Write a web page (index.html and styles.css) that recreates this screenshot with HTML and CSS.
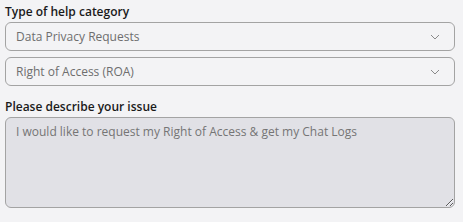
FILE: index.html
```html
<!DOCTYPE html>
<html lang="en">
<head>
  <meta charset="UTF-8">
  <title>Help request</title>
  <link rel="stylesheet" href="styles.css">
</head>
<body>
  <div class="form">
    <label class="label">Type of help category</label>
    <div class="select">
      <span>Data Privacy Requests</span>
      <svg class="chev" width="10" height="6" viewBox="0 0 10 6"><path d="M1 1l4 4 4-4" fill="none" stroke="#8a8a8a" stroke-width="1"/></svg>
    </div>
    <div class="select">
      <span>Right of Access (ROA)</span>
      <svg class="chev" width="10" height="6" viewBox="0 0 10 6"><path d="M1 1l4 4 4-4" fill="none" stroke="#8a8a8a" stroke-width="1"/></svg>
    </div>

    <label class="label label-2">Please describe your issue</label>
    <textarea class="issue" disabled>I would like to request my Right of Access &amp; get my Chat Logs</textarea>
  </div>
</body>
</html>
```

FILE: styles.css
```css
* {
  margin: 0;
  padding: 0;
  box-sizing: border-box;
}

body {
  font-family: "Open Sans", sans-serif;
  background-color: #f3f3f5;
  width: 463px;
  height: 222px;
  overflow: hidden;
}

.form {
  display: flex;
  flex-direction: column;
  padding: 4px 8px 0 5px;
}

.label {
  font-size: 12px;
  font-weight: 600;
  color: #1a1a1a;
  line-height: 16px;
  margin-bottom: 2px;
}

.label-2 {
  margin-top: 7px;
}

.select {
  display: flex;
  justify-content: space-between;
  align-items: center;
  height: 29px;
  border: 1px solid #a3a3a3;
  border-radius: 6px;
  padding: 0 14px 0 10px;
  margin-bottom: 6px;
  font-size: 12px;
  color: #6e6e6e;
}

.issue {
  height: 91px;
  resize: vertical;
  border: 1px solid #a3a3a3;
  border-radius: 6px;
  background-color: #e1e1e6;
  padding: 5px 10px;
  font-family: "Open Sans", sans-serif;
  font-size: 12px;
  color: #757575;
}
```
